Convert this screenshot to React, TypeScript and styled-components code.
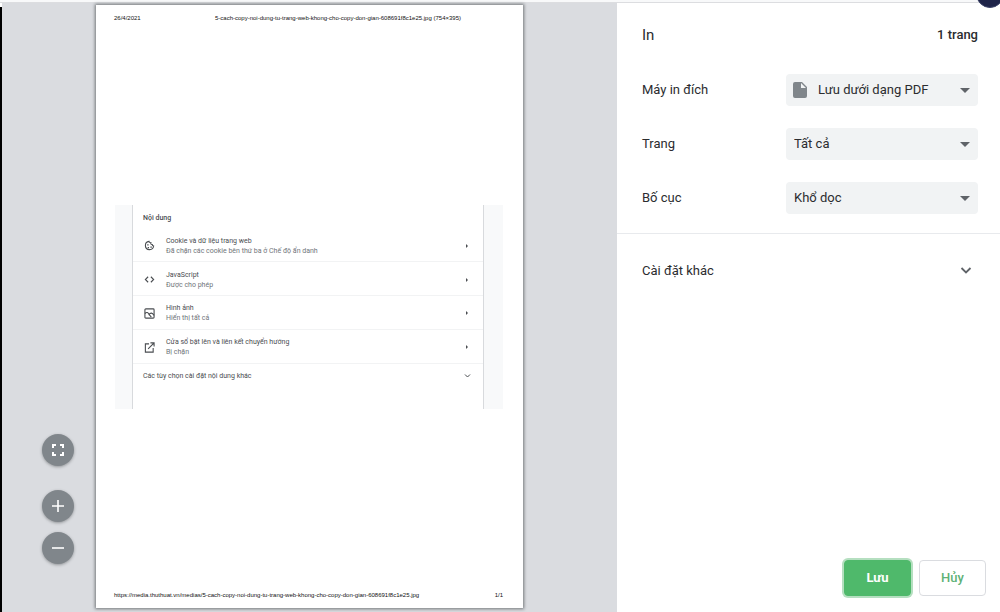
import React from "react";
import styled, { createGlobalStyle } from "styled-components";

const GlobalStyle = createGlobalStyle`
  *, *::before, *::after { box-sizing: border-box; }
  body { margin: 0; background: #fff; color: #2b2c2f; font-family: Roboto, "Noto Sans", sans-serif; font-size: 13px; }
  button, select { font: inherit; color: inherit; }
  h1, h2, p { margin: 0; }
`;

const Screen = styled.div`
  position: relative;
  display: flex;
  flex-direction: column;
  min-height: 100vh;
  overflow: hidden;
`;

const TopEdge = styled.div`
  height: 3px;
  background: #f8f9fa;
  border-bottom: 1px solid #dcdde0;
`;

const Avatar = styled.div`
  position: absolute;
  top: -20px;
  right: -4px;
  width: 28px;
  height: 28px;
  border-radius: 50%;
  background: #1e2348;
  border: 1px solid #3b4268;
`;

const Dialog = styled.div`
  flex: 1;
  display: flex;
`;

const WindowEdge = styled.div`
  width: 2px;
  margin-top: 4px;
  background: #000;
`;

const Preview = styled.main`
  position: relative;
  flex: 1;
  display: flex;
  justify-content: center;
  padding: 2px 94px 4px;
  background: #dadce0;
`;

const Paper = styled.article`
  flex: 1;
  max-width: 640px;
  display: flex;
  flex-direction: column;
  justify-content: space-between;
  padding: 9px 20px 9px 19px;
  background: #fff;
  box-shadow: 0 0 3px 1px rgba(60, 64, 67, 0.65);
`;

const PageLine = styled.div`
  display: grid;
  grid-template-columns: ${(p: { $columns: string }) => p.$columns};
  margin-left: -1px;
  font-family: "Liberation Sans", Arial, sans-serif;
  font-size: 6px;
  line-height: 8px;
  color: #111;
  white-space: nowrap;
`;

const SettingsShot = styled.section`
  padding: 0 19px 0 17px;
  background: #f8f9fa;
  color: #4a4d51;
  font-size: 7px;
  line-height: 10px;
`;

const SettingsCard = styled.div`
  height: 204px;
  padding-top: 8px;
  background: #fff;
  border: solid #d8dadd;
  border-width: 0 1px;
`;

const CardHeading = styled.h2`
  padding-left: 10px;
  font-size: 7px;
  line-height: 10px;
  font-weight: 500;
`;

const SettingsList = styled.div`
  display: grid;
  grid-auto-rows: 1fr;
  height: 135px;
  margin-top: 6px;
  margin-bottom: 5px;
`;

const SettingsRow = styled.div`
  display: flex;
  align-items: center;
  padding: 2px 12px 0 11px;
  border-bottom: 1px solid #f2f3f4;
`;

const RowText = styled.div`
  flex: 1;
  margin-left: 11px;
  color: #70757a;
`;

const RowTitle = styled.p`
  color: #4a4d51;
`;

const MoreRow = styled.div`
  display: flex;
  justify-content: space-between;
  align-items: center;
  padding: 2px 12px 0 10px;
`;

const Glyph = styled.svg<{ $size: number }>`
  display: block;
  flex: none;
  width: ${(p) => p.$size}px;
  height: ${(p) => p.$size}px;
`;

const ZoomControls = styled.div`
  position: absolute;
  left: 40px;
  bottom: 48px;
  display: flex;
  flex-direction: column;
  gap: 10px;
`;

const RoundButton = styled.button<{ $apart?: boolean }>`
  display: grid;
  place-items: center;
  width: 32px;
  height: 32px;
  margin-bottom: ${(p) => (p.$apart ? 14 : 0)}px;
  padding: 0;
  border: 0;
  border-radius: 50%;
  background: #80868b;
  color: #fff;
  box-shadow: 0 1px 3px rgba(60, 64, 67, 0.45);
`;

const Sidebar = styled.aside`
  display: flex;
  flex-direction: column;
  width: 38.3%;
  background: #fff;
`;

const SidebarHeader = styled.header`
  display: flex;
  justify-content: space-between;
  align-items: center;
  height: 63px;
  padding: 0 22px 0 25px;
`;

const Title = styled.h1`
  font-size: 15px;
  font-weight: 400;
`;

const PageCount = styled.span`
  font-weight: 500;
`;

const Fields = styled.div`
  display: flex;
  flex-direction: column;
  gap: 22px;
  padding: 8px 22px 19px 25px;
  border-bottom: 1px solid #e8eaed;
`;

const Field = styled.div`
  display: flex;
  justify-content: space-between;
  align-items: center;
`;

const FieldLabel = styled.label`
  padding-bottom: 2px;
`;

const SelectBox = styled.div`
  position: relative;
  width: 192px;
`;

const Select = styled.select<{ $withIcon?: boolean }>`
  display: block;
  appearance: none;
  width: 100%;
  height: 32px;
  padding: 0 32px 2px ${(p) => (p.$withIcon ? 32 : 8)}px;
  border: 0;
  border-radius: 4px;
  background: #f1f3f4;
`;

const Caret = styled.svg`
  position: absolute;
  right: 8px;
  top: 14px;
  width: 10px;
  height: 5px;
  pointer-events: none;
`;

const FileIcon = styled.svg`
  position: absolute;
  left: 7px;
  top: 8px;
  width: 14px;
  height: 16px;
  pointer-events: none;
`;

const MoreSettings = styled.button`
  display: flex;
  justify-content: space-between;
  align-items: center;
  height: 72px;
  padding: 0 28px 0 25px;
  border: 0;
  background: none;
  text-align: left;
`;

const Actions = styled.footer`
  display: flex;
  justify-content: flex-end;
  gap: 8px;
  margin-top: auto;
  padding: 16px 14px;
`;

const ActionButton = styled.button<{ $primary?: boolean }>`
  width: 67px;
  height: 36px;
  padding: 0 0 2px;
  border: 1px solid ${(p) => (p.$primary ? "#4fb96b" : "#dadce0")};
  border-radius: 4px;
  background: ${(p) => (p.$primary ? "#4fb96b" : "#fff")};
  color: ${(p) => (p.$primary ? "#fff" : "#5fb277")};
  font-weight: ${(p) => (p.$primary ? 700 : 500)};
  box-shadow: ${(p) => (p.$primary ? "0 0 0 2px #b5dfc0" : "none")};
`;

const stroke = {
  fill: "none",
  stroke: "#4a4d51",
  strokeWidth: 2.4,
};

const siteSettings = [
  {
    title: "Cookie và dữ liệu trang web",
    detail: "Đã chặn các cookie bên thứ ba ở Chế độ ẩn danh",
    icon: (
      <g>
        <path {...stroke} d="M11 3a9 9 0 1 0 10 10c-2 0-3-1-3-3-3 0-4-2-3-4-2 0-4-1-4-3Z" />
        <path fill="#4a4d51" d="M7 9h3v3H7zM8 15h3v3H8zM14 14h3v3h-3z" />
      </g>
    ),
  },
  {
    title: "JavaScript",
    detail: "Được cho phép",
    icon: <path {...stroke} d="m9 6-6 6 6 6M15 6l6 6-6 6" />,
  },
  {
    title: "Hình ảnh",
    detail: "Hiển thị tất cả",
    icon: (
      <g {...stroke}>
        <rect x="2" y="2" width="20" height="20" rx="2" />
        <path d="M2 12c4-4 7-2 9 2 3-4 7-4 11 2M11 14l5 6" />
      </g>
    ),
  },
  {
    title: "Cửa sổ bật lên và liên kết chuyển hướng",
    detail: "Bị chặn",
    icon: <path {...stroke} d="M11 4H3v18h17v-9M14 2h8v8M22 2 9 15" />,
  },
];

interface DropDownProps {
  id: string;
  label: string;
  value: string;
  icon?: React.ReactNode;
}

function DropDown({ id, label, value, icon }: DropDownProps) {
  return (
    <Field>
      <FieldLabel htmlFor={id}>{label}</FieldLabel>
      <SelectBox>
        <Select id={id} $withIcon={Boolean(icon)}>
          <option>{value}</option>
        </Select>
        {icon}
        <Caret viewBox="0 0 10 5" aria-hidden="true">
          <path fill="#5f6368" d="M0 0h10L5 5z" />
        </Caret>
      </SelectBox>
    </Field>
  );
}

export default function App() {
  return (
    <Screen>
      <GlobalStyle />
      <TopEdge />
      <Avatar />
      <Dialog>
        <WindowEdge />
        <Preview>
          <Paper>
            <PageLine $columns="101px 1fr">
              <span>26/4/2021</span>
              <span>5-cach-copy-noi-dung-tu-trang-web-khong-cho-copy-don-gian-608691f8c1e25.jpg (754×395)</span>
            </PageLine>
            <SettingsShot>
              <SettingsCard>
                <CardHeading>Nội dung</CardHeading>
                <SettingsList>
                  {siteSettings.map((s) => (
                    <SettingsRow key={s.title}>
                      <Glyph $size={11} viewBox="0 0 24 24" aria-hidden="true">
                        {s.icon}
                      </Glyph>
                      <RowText>
                        <RowTitle>{s.title}</RowTitle>
                        <p>{s.detail}</p>
                      </RowText>
                      <Glyph $size={8} viewBox="0 0 8 8" aria-hidden="true">
                        <path fill="#4a4d51" d="M3 2v4l2-2z" />
                      </Glyph>
                    </SettingsRow>
                  ))}
                </SettingsList>
                <MoreRow>
                  <span>Các tùy chọn cài đặt nội dung khác</span>
                  <Glyph $size={7} viewBox="0 0 7 7" aria-hidden="true">
                    <path d="m1 2.5 2.500 2.500L6 2.500" fill="none" stroke="#4a4d51" />
                  </Glyph>
                </MoreRow>
              </SettingsCard>
            </SettingsShot>
            <PageLine $columns="1fr auto">
              <span>https://media.thuthuat.vn/medias/5-cach-copy-noi-dung-tu-trang-web-khong-cho-copy-don-gian-608691f8c1e25.jpg</span>
              <span>1/1</span>
            </PageLine>
          </Paper>
          <ZoomControls>
            <RoundButton $apart aria-label="Vừa với trang">
              <Glyph $size={12} viewBox="0 0 12 12">
                <path d="M1 4V1h3M8 1h3v3M11 8v3H8M4 11H1V8" fill="none" stroke="currentColor" strokeWidth="2" />
              </Glyph>
            </RoundButton>
            <RoundButton aria-label="Phóng to">
              <Glyph $size={12} viewBox="0 0 12 12">
                <path d="M0 6h12M6 0v12" stroke="currentColor" strokeWidth="1.600" />
              </Glyph>
            </RoundButton>
            <RoundButton aria-label="Thu nhỏ">
              <Glyph $size={12} viewBox="0 0 12 12">
                <path d="M0 6h12" stroke="currentColor" strokeWidth="1.600" />
              </Glyph>
            </RoundButton>
          </ZoomControls>
        </Preview>
        <Sidebar>
          <SidebarHeader>
            <Title>In</Title>
            <PageCount>1 trang</PageCount>
          </SidebarHeader>
          <Fields>
            <DropDown
              id="destination"
              label="Máy in đích"
              value="Lưu dưới dạng PDF"
              icon={
                <FileIcon viewBox="0 0 14 16" aria-hidden="true">
                  <path fill="#80868b" fillRule="evenodd" d="M2 0h7l5 5v9a2 2 0 0 1-2 2H2a2 2 0 0 1-2-2V2a2 2 0 0 1 2-2Zm6 1v5h5z" />
                </FileIcon>
              }
            />
            <DropDown id="pages" label="Trang" value="Tất cả" />
            <DropDown id="layout" label="Bố cục" value="Khổ dọc" />
          </Fields>
          <MoreSettings>
            Cài đặt khác
            <Glyph $size={12} viewBox="0 0 12 12" aria-hidden="true">
              <path d="m1.500 4 4.500 4.500L10.500 4" fill="none" stroke="#5f6368" strokeWidth="1.800" />
            </Glyph>
          </MoreSettings>
          <Actions>
            <ActionButton $primary>Lưu</ActionButton>
            <ActionButton>Hủy</ActionButton>
          </Actions>
        </Sidebar>
      </Dialog>
    </Screen>
  );
}
